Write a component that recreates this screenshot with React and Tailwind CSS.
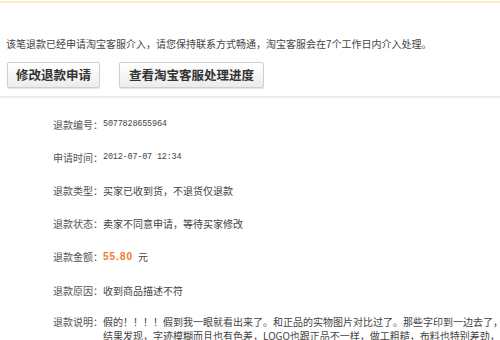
const rows = [
  { label: "退款编号：", value: "5077828655964", mono: true },
  { label: "申请时间：", value: "2012-07-07 12:34", mono: true },
  { label: "退款类型：", value: "买家已收到货，不退货仅退款" },
  { label: "退款状态：", value: "卖家不同意申请，等待买家修改" },
];

const cjk = "font-['SimSun','Noto_Sans_CJK_SC',sans-serif]";

const Row = ({ label, children }) => (
  <div className="flex h-[33px] items-center pl-[53px] text-[10px] leading-none text-[#444]">
    <span className="text-[#555]">{label}</span>
    {children}
  </div>
);

export default function App() {
  return (
    <div className={`w-[500px] h-[340px] overflow-hidden bg-white ${cjk}`}>
      {/* 顶部提示框边缘 */}
      <div className="h-[3px] border-b-2 border-[#f6efc9] bg-[#fffdf2]"></div>

      <div className="pt-[36px] pl-[6px] text-[10px] leading-none text-[#444]">
        该笔退款已经申请淘宝客服介入，请您保持联系方式畅通，淘宝客服会在7个工作日内介入处理。
      </div>

      <div className="flex gap-[19px] pl-[7px] pt-[13px]">
        <button className="h-[26px] w-[93px] rounded-[2px] border border-[#cfcfcf] bg-gradient-to-b from-white to-[#ececec] text-[12.5px] font-bold text-[#333] shadow-[0_1px_1px_rgba(0,0,0,0.12)]">
          修改退款申请
        </button>
        <button className="h-[26px] w-[145px] rounded-[2px] border border-[#cfcfcf] bg-gradient-to-b from-white to-[#ececec] text-[12.5px] font-bold text-[#333] shadow-[0_1px_1px_rgba(0,0,0,0.12)]">
          查看淘宝客服处理进度
        </button>
      </div>

      <div className="mt-[8px] h-[2px] bg-[#ececec]"></div>

      <div className="pt-[10px]">
        {rows.map((r) => (
          <Row key={r.label} label={r.label}>
            <span
              className={
                r.mono
                  ? "font-['Liberation_Mono',monospace] text-[8.5px] tracking-[-0.2px] text-[#444]"
                  : ""
              }
            >
              {r.value}
            </span>
          </Row>
        ))}
        <Row label="退款金额：">
          <span className="font-['Liberation_Sans',sans-serif] text-[10px] font-bold tracking-[1px] text-[#f37a2b]">
            55.80
          </span>
          <span className="ml-[5px]">元</span>
        </Row>
        <div className="h-px"></div>
        <Row label="退款原因：">
          <span>收到商品描述不符</span>
        </Row>
        <div className="flex pl-[53px] pt-[8px] text-[10px] leading-[14px] text-[#444]">
          <span className="shrink-0 text-[#555]">退款说明：</span>
          <div className="shrink-0 whitespace-nowrap">
            <div>假的！！！！假到我一眼就看出来了。和正品的实物图片对比过了。那些字印到一边去了，</div>
            <div>结果发现，字迹模糊而且也有色差，LOGO也跟正品不一样，做工粗糙，布料也特别差劲，</div>
          </div>
        </div>
      </div>
    </div>
  );
}
